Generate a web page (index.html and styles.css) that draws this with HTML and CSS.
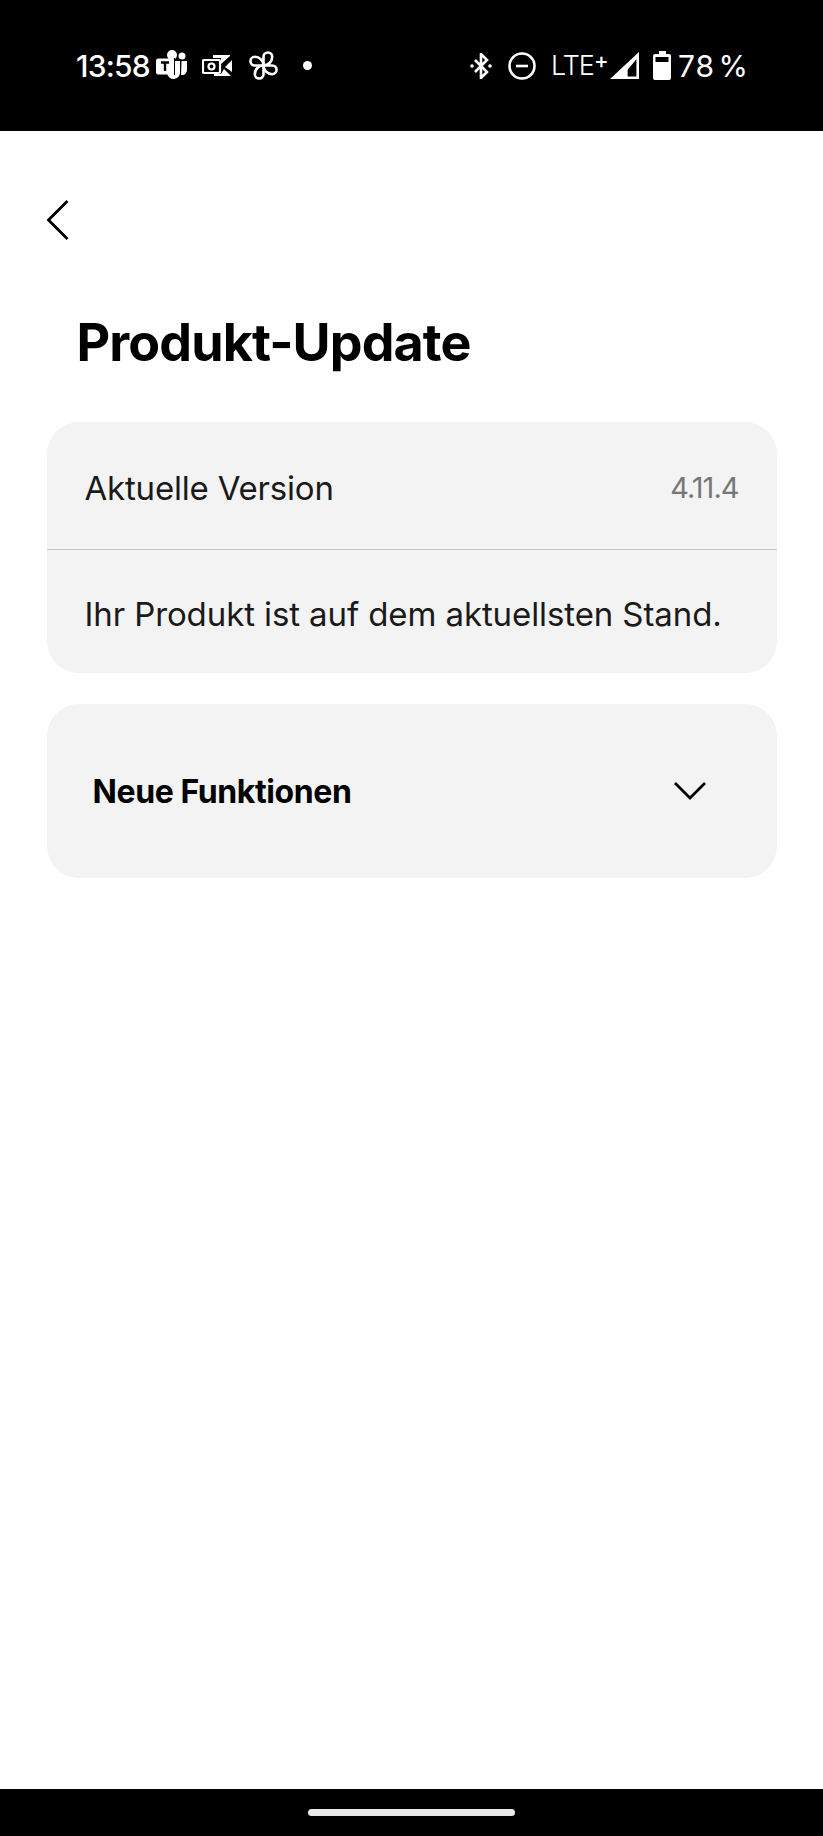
FILE: index.html
```html
<!DOCTYPE html>
<html lang="de">
<head>
<meta charset="utf-8">
<title>Produkt-Update</title>
<link rel="stylesheet" href="styles.css">
</head>
<body>
<div class="app">
  <header class="status">
    <div class="status-left">
      <span class="time">13:58</span>
      <svg class="ic-teams" viewBox="0 0 31 29" width="31" height="29"><circle cx="16" cy="5" r="5" fill="#fff"/><circle cx="26" cy="6" r="3.500" fill="#fff"/><path d="M14 11h10v11a6.500 6.500 0 0 1-13 1V20h3z" fill="#fff"/><path d="M25.500 11H31v9a5 5 0 0 1-6 5z" fill="#fff"/><rect x="0" y="8.500" width="18" height="16" rx="2" fill="#fff"/><path d="M18.500 8v17" stroke="#000" stroke-width="1"/><path d="M5 12.500h8M9 12.500V21" stroke="#000" stroke-width="2.400" fill="none"/></svg>
      <svg class="ic-outlook" viewBox="0 0 30 22" width="30" height="22"><rect x="1" y="5" width="17" height="13" rx="1" fill="none" stroke="#fff" stroke-width="2.200"/><circle cx="9.500" cy="11.500" r="3" fill="none" stroke="#fff" stroke-width="2.200"/><path d="M11 0h17v1L19 9V3h-8zM30 5v12l-7-5zM12 21v-2h7l3-5 7 7z" fill="#fff"/></svg>
      <svg class="ic-pin" viewBox="0 0 30 30" width="29" height="29" fill="none" stroke="#fff" stroke-width="2.700"><path d="M15 15V6a4.500 4.500 0 0 1 9 0c0 5-4 9-9 9z"/><path d="M15 15h9a4.500 4.500 0 0 1 0 9c-5 0-9-4-9-9z"/><path d="M15 15v9a4.500 4.500 0 0 1-9 0c0-5 4-9 9-9z"/><path d="M15 15H6a4.500 4.500 0 0 1 0-9c5 0 9 4 9 9z"/></svg>
      <span class="dot"></span>
    </div>
    <div class="status-right">
      <svg class="ic-bt" viewBox="0 0 22 26" width="22" height="26" fill="none" stroke="#fff" stroke-width="2.600"><path d="M5 7l12 12-6 6V1l6 6L5 19"/><circle cx="2" cy="13" r="1.800" fill="#fff" stroke="none"/><circle cx="20" cy="13" r="1.800" fill="#fff" stroke="none"/></svg>
      <svg class="ic-dnd" viewBox="0 0 28 28" width="28" height="28" fill="none" stroke="#fff" stroke-width="2.600"><circle cx="14" cy="14" r="12.500"/><path d="M8 14h12"/></svg>
      <span class="lte">LTE<sup class="plus">+</sup></span>
      <svg class="ic-signal" viewBox="0 0 28 26" width="29" height="27"><path d="M28 0v26H0zM25.500 7L17 17v6.500h8.500z" fill="#fff" fill-rule="evenodd"/></svg>
      <svg class="ic-batt" viewBox="0 0 18 29" width="18" height="29"><path d="M6 0h7v3h3a2 2 0 0 1 2 2v22a2 2 0 0 1-2 2H2a2 2 0 0 1-2-2V5a2 2 0 0 1 2-2h4z" fill="#fff"/><rect x="2.500" y="6" width="13" height="5" fill="#000"/></svg>
      <span class="pct">78 %</span>
    </div>
  </header>

  <main class="content">
    <button class="back" aria-label="Zurück">
      <svg viewBox="0 0 24 42" width="24" height="42" fill="none" stroke="#000" stroke-width="2.800"><path d="M20.500 2L1.500 21l19 19"/></svg>
    </button>
    <h1 class="title">Produkt-Update</h1>

    <section class="card">
      <div class="row">
        <span class="label">Aktuelle Version</span>
        <span class="version">4.11.4</span>
      </div>
      <div class="row-status">Ihr Produkt ist auf dem aktuellsten Stand.</div>
    </section>

    <section class="card card-expand">
      <span class="expand-title">Neue Funktionen</span>
      <svg class="chev" viewBox="0 0 32 20" width="32" height="20" fill="none" stroke="#000" stroke-width="2.800"><path d="M1 2l15 15L31 2"/></svg>
    </section>
  </main>

  <footer class="nav"><span class="handle"></span></footer>
</div>
</body>
</html>
```

FILE: styles.css
```css
* { box-sizing: border-box; }
html, body { margin: 0; padding: 0; background: #fff; }
body { font-family: Inter, "Liberation Sans", sans-serif; }
.app { width: 823px; height: 1836px; display: flex; flex-direction: column; overflow: hidden; }

.status { height: 131px; background: #000; color: #fff; display: flex; justify-content: space-between; align-items: center; padding: 0 74px 0 76px; }
.status-left, .status-right { display: flex; align-items: center; }
.time { font-size: 30px; font-weight: 450; letter-spacing: -0.8px; width: 80px; }
.ic-teams { margin-top: -3px; }
.ic-outlook { margin-left: 15px; }
.ic-pin { margin-left: 17px; }
.dot { width: 9px; height: 9px; border-radius: 50%; background: #fff; margin-left: 25px; }
.ic-dnd { margin-left: 16px; }
.lte { font-size: 27px; font-weight: 300; margin-left: 15px; width: 59px; letter-spacing: -1px; }
.plus { font-size: 22px; font-weight: 500; line-height: 0; vertical-align: 7px; }
.ic-batt { margin-left: 14px; }
.pct { font-size: 30px; font-weight: 400; margin-left: 7px; letter-spacing: 1px; word-spacing: -6px; }

.content { flex: 1; padding: 68px 46px 0 46.500px; }
.back { display: block; padding: 0; border: 0; background: none; height: 42px; }
.title { margin: 72px 0 0 30px; font-size: 52px; line-height: 60px; font-weight: 700; color: #000; letter-spacing: -0.9px; }

.card { background: #f3f3f3; border-radius: 32px; width: 730px; }
.title + .card { margin-top: 49px; }
.row { height: 128px; padding: 4px 38px 0; display: flex; justify-content: space-between; align-items: center; border-bottom: 1px solid #c4c4c4; }
.label { font-size: 33px; color: #1a1a1a; letter-spacing: -0.2px; }
.version { font-size: 29px; color: #777; letter-spacing: -1px; }
.row-status { height: 123px; padding: 44px 38px 0; font-size: 33px; color: #1a1a1a; white-space: nowrap; letter-spacing: -0.1px; }
.card-expand { margin-top: 31px; height: 174px; display: flex; justify-content: space-between; align-items: center; padding: 0 71px 0 46px; }
.expand-title { font-size: 32px; font-weight: 700; color: #000; letter-spacing: -0.4px; }

.nav { height: 47px; background: #000; display: flex; justify-content: center; padding-top: 20px; }
.handle { width: 207px; height: 7px; border-radius: 4px; background: #e8e8e8; }
```
